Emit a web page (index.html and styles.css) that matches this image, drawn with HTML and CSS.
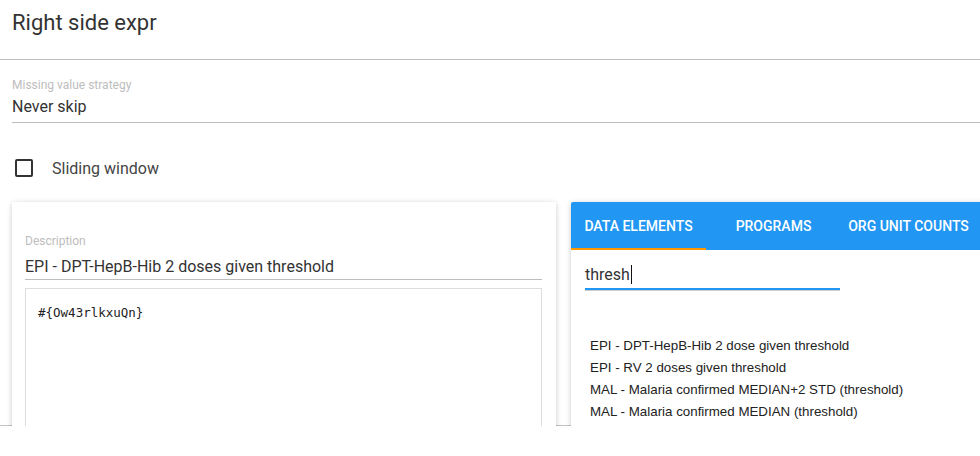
FILE: index.html
```html
<!DOCTYPE html>
<html>
<head>
<meta charset="utf-8">
<link rel="stylesheet" href="styles.css">
</head>
<body>
<div class="page">
  <h1 class="title">Right side expr</h1>
  <div class="field select">
    <div class="label">Missing value strategy</div>
    <div class="value">Never skip</div>
  </div>
  <label class="check">
    <span class="box"></span>
    <span class="check-text">Sliding window</span>
  </label>
  <div class="cards">
    <div class="card left">
      <div class="field desc">
        <div class="label">Description</div>
        <div class="value">EPI - DPT-HepB-Hib 2 doses given threshold</div>
      </div>
      <div class="editor"><code>#{Ow43rlkxuQn}</code></div>
    </div>
    <div class="card right">
      <div class="tabs">
        <div class="tab active">DATA ELEMENTS</div>
        <div class="tab">PROGRAMS</div>
        <div class="tab">ORG UNIT COUNTS</div>
      </div>
      <div class="search"><span>thresh</span><span class="caret"></span></div>
      <ul class="list">
        <li>EPI - DPT-HepB-Hib 2 dose given threshold</li>
        <li>EPI - RV 2 doses given threshold</li>
        <li>MAL - Malaria confirmed MEDIAN+2 STD (threshold)</li>
        <li>MAL - Malaria confirmed MEDIAN (threshold)</li>
      </ul>
    </div>
  </div>
</div>
</body>
</html>
```

FILE: styles.css
```css
html, body {
  margin: 0;
  padding: 0;
  background: #fff;
  overflow: hidden;
  width: 980px;
  height: 456px;
}
body {
  font-family: Roboto, "Liberation Sans", sans-serif;
  color: #333;
}
.page {
  height: 426px;
  overflow: hidden;
  box-shadow: inset 0 -1px 0 #c4c4c4;
  width: 980px;
}
.title {
  margin: 0;
  font-size: 22px;
  font-weight: 400;
  line-height: 24px;
  color: #333;
  padding: 11px 12px 0;
  height: 48px;
  border-bottom: 1px solid #bdbdbd;
}
.field .label {
  font-size: 12px;
  color: #bdbdbd;
  line-height: 14px;
}
.field .value {
  font-size: 16px;
  color: #333;
  line-height: 20px;
}
.select {
  margin: 18px 0 0 12px;
  padding-bottom: 5px;
  border-bottom: 1px solid #bdbdbd;
}
.select .value {
  margin-top: 5px;
}
.check {
  display: flex;
  align-items: center;
  margin: 35px 0 0 15px;
  height: 20px;
}
.box {
  width: 14px;
  height: 14px;
  border: 2px solid #333;
  border-radius: 2px;
}
.check-text {
  margin-left: 19px;
  font-size: 16px;
  color: #444;
}
.cards {
  display: flex;
  gap: 15px;
  margin: 24px 0 0 12px;
}
.card {
  background: #fff;
  border-radius: 2px;
  box-shadow: 0 1px 6px rgba(0,0,0,0.12), 0 1px 4px rgba(0,0,0,0.10);
  flex: 0 0 544px;
  height: 300px;
}
.left {
  padding: 0 14px 0 13px;
  box-sizing: border-box;
}
.desc {
  margin-top: 32px;
  padding-bottom: 2px;
  border-bottom: 1px solid #bdbdbd;
}
.desc .value {
  margin-top: 9px;
  line-height: 20px;
}
.editor {
  margin-top: 8px;
  border: 1px solid #ddd;
  height: 200px;
  padding: 13px 12px;
}
.editor code {
  font-family: "DejaVu Sans Mono", monospace;
  font-size: 12.5px;
  color: #222;
}
.tabs {
  display: flex;
  background: #2196f3;
  height: 48px;
  border-radius: 2px 2px 0 0;
}
.tab {
  width: 135px;
  display: flex;
  align-items: center;
  justify-content: center;
  color: #fff;
  font-size: 14px;
  font-weight: 500;
  box-sizing: border-box;
}
.tab.active {
  border-bottom: 2px solid #ff9800;
  padding-top: 2px;
}
.search {
  margin: 11px 0 0 14px;
  width: 255px;
  height: 29px;
  box-sizing: border-box;
  font-size: 16px;
  color: #333;
  display: flex;
  align-items: center;
  border-bottom: 2px solid #2196f3;
  box-shadow: 0 1px 0 #ccc;
}
.caret {
  width: 1px;
  height: 19px;
  background: #111;
  margin-left: 1px;
}
.list {
  list-style: none;
  margin: 45px 0 0 19px;
  padding: 0;
  font-family: "Liberation Sans", Arial, sans-serif;
  font-size: 13.33px;
  color: #222;
}
.list li {
  line-height: 22px;
}
```
